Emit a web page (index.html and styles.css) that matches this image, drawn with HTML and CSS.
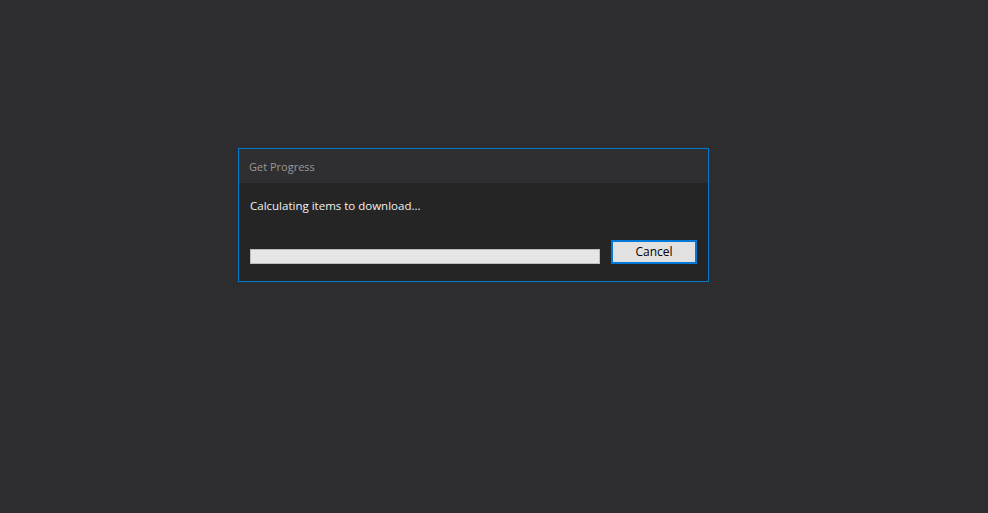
FILE: index.html
```html
<!DOCTYPE html>
<html>
<head>
<meta charset="utf-8">
<link rel="stylesheet" href="styles.css">
</head>
<body>
<div class="dialog">
  <div class="titlebar">Get Progress</div>
  <div class="content">
    <div class="message">Calculating items to download...</div>
    <div class="actions">
      <div class="progress"></div>
      <button class="btn">Cancel</button>
    </div>
  </div>
</div>
</body>
</html>
```
FILE: styles.css
```css
html, body {
  margin: 0;
  padding: 0;
  height: 100%;
  background: #2d2d30;
  font-family: "Open Sans", "Noto Sans", "Liberation Sans", sans-serif;
  font-size: 12px;
}
body {
  padding: 148px 0 0 238px;
  box-sizing: border-box;
}
.dialog {
  width: 471px;
  height: 134px;
  box-sizing: border-box;
  border: 1px solid #007acc;
  background: #252526;
  display: flex;
  flex-direction: column;
}
.titlebar {
  height: 34px;
  box-sizing: border-box;
  background: #2f2f32;
  color: #999999;
  padding: 1px 0 0 10px;
  font-size: 11px;
  line-height: 33px;
}
.content {
  flex: 1;
  padding: 15px 11px 0 11px;
  display: flex;
  flex-direction: column;
}
.message {
  color: #f1f1f1;
  font-size: 11.5px;
  line-height: 16px;
  height: 16px;
}
.actions {
  margin-top: 26px;
  display: flex;
  align-items: flex-end;
  gap: 11px;
}
.progress {
  width: 350px;
  height: 15px;
  box-sizing: border-box;
  background: #e6e6e6;
  border: 1px solid #bcbcbc;
}
.btn {
  width: 86px;
  height: 24px;
  box-sizing: border-box;
  margin: 0;
  padding: 0;
  border: 2px solid #0078d7;
  background: #e1e1e1;
  color: #000;
  font-family: inherit;
  font-size: 12px;
  line-height: 18px;
}
```
